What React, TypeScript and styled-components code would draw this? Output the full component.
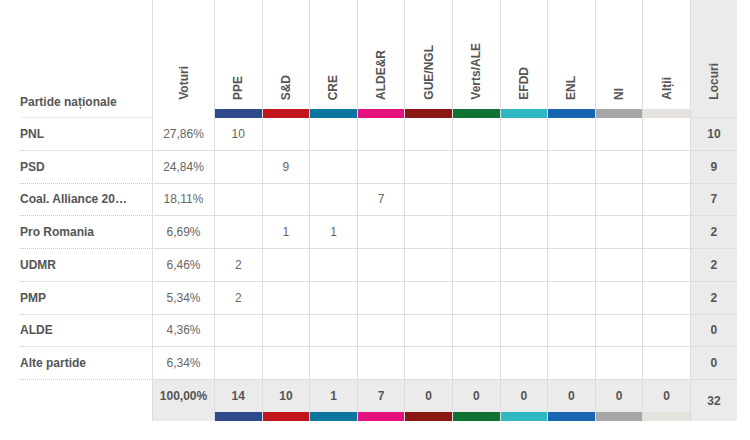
import React from "react";
import styled, { createGlobalStyle } from "styled-components";

const Global = createGlobalStyle`
  html, body { margin: 0; padding: 0; background: #fff; }
  body { font-family: "Liberation Sans", Arial, sans-serif; }
`;

type Party = { key: string; label: string; color: string };

const parties: Party[] = [
  { key: "ppe", label: "PPE", color: "#2c4a8c" },
  { key: "sd", label: "S&D", color: "#c3161c" },
  { key: "cre", label: "CRE", color: "#0a76a0" },
  { key: "alde", label: "ALDE&R", color: "#e5117e" },
  { key: "gue", label: "GUE/NGL", color: "#8a1914" },
  { key: "verts", label: "Verts/ALE", color: "#0e7234" },
  { key: "efdd", label: "EFDD", color: "#2fb8c1" },
  { key: "enl", label: "ENL", color: "#1866b2" },
  { key: "ni", label: "NI", color: "#a6a6a6" },
  { key: "alt", label: "Alții", color: "#e6e3df" },
];

type Row = { name: string; votes: string; seats: Record<string, number>; total: number };

const rows: Row[] = [
  { name: "PNL", votes: "27,86%", seats: { ppe: 10 }, total: 10 },
  { name: "PSD", votes: "24,84%", seats: { sd: 9 }, total: 9 },
  { name: "Coal. Alliance 20…", votes: "18,11%", seats: { alde: 7 }, total: 7 },
  { name: "Pro Romania", votes: "6,69%", seats: { sd: 1, cre: 1 }, total: 2 },
  { name: "UDMR", votes: "6,46%", seats: { ppe: 2 }, total: 2 },
  { name: "PMP", votes: "5,34%", seats: { ppe: 2 }, total: 2 },
  { name: "ALDE", votes: "4,36%", seats: {}, total: 0 },
  { name: "Alte partide", votes: "6,34%", seats: {}, total: 0 },
];

const totals: Record<string, number> = {
  ppe: 14, sd: 10, cre: 1, alde: 7, gue: 0, verts: 0, efdd: 0, enl: 0, ni: 0, alt: 0,
};

const Page = styled.div`
  padding-left: 20px;
`;

const Table = styled.div`
  display: grid;
  grid-template-columns: 132px 62px repeat(10, 47.6px) 47px;
  grid-template-rows: 118px repeat(8, 32.75px) 41px;
  font-size: 12px;
  line-height: 14px;
`;

const NameHead = styled.div`
  display: flex;
  align-items: flex-end;
  padding-bottom: 8px;
  border-bottom: 1px solid #eeeeee;
  font-weight: bold;
  color: #555;
  box-sizing: border-box;
`;

const ColHead = styled.div<{ $grey?: boolean }>`
  display: flex;
  flex-direction: column;
  align-items: center;
  justify-content: flex-end;
  border-left: 1px solid #dddddd;
  background: ${(p) => (p.$grey ? "#ebebeb" : "#fff")};
  border-bottom: ${(p) => (p.$grey ? "1px solid #dddddd" : "none")};
  padding-bottom: ${(p) => (p.$grey ? "17px" : "18px")};
  box-sizing: border-box;
`;

const PartyHead = styled.div`
  display: flex;
  flex-direction: column;
  align-items: center;
  justify-content: flex-end;
  border-left: 1px solid #dddddd;
  box-sizing: border-box;
`;

const VLabel = styled.span`
  writing-mode: vertical-rl;
  transform: rotate(180deg);
  font-weight: bold;
  color: #555;
  white-space: nowrap;
`;

const Bar = styled.div<{ $color: string }>`
  align-self: stretch;
  height: 9px;
  margin-top: 9px;
  background: ${(p) => p.$color};
`;

const FootBar = styled.div<{ $color: string }>`
  align-self: stretch;
  height: 9px;
  background: ${(p) => p.$color};
`;

const NameCell = styled.div`
  display: flex;
  align-items: center;
  border-bottom: 1px dotted #c8c8c8;
  font-weight: bold;
  color: #555;
  white-space: nowrap;
  box-sizing: border-box;
`;

const Cell = styled.div<{ $grey?: boolean; $bold?: boolean }>`
  display: flex;
  align-items: center;
  justify-content: center;
  border-left: 1px solid #dddddd;
  border-bottom: 1px solid #dddddd;
  background: ${(p) => (p.$grey ? "#ebebeb" : "#fff")};
  color: ${(p) => (p.$bold ? "#555" : "#666")};
  font-weight: ${(p) => (p.$bold ? "bold" : "normal")};
  box-sizing: border-box;
`;

const Blank = styled.div``;

const FootCell = styled.div`
  display: flex;
  flex-direction: column;
  align-items: center;
  border-left: 1px solid #dddddd;
  background: #ebebeb;
  color: #555;
  font-weight: bold;
  box-sizing: border-box;
`;

const FootValue = styled.div`
  flex: 1;
  display: flex;
  align-items: center;
  justify-content: center;
`;

export default function App() {
  return (
    <Page>
      <Global />
      <Table>
        <NameHead>Partide naționale</NameHead>
        <ColHead>
          <VLabel>Voturi</VLabel>
        </ColHead>
        {parties.map((p) => (
          <PartyHead key={p.key}>
            <VLabel>{p.label}</VLabel>
            <Bar $color={p.color} />
          </PartyHead>
        ))}
        <ColHead $grey>
          <VLabel>Locuri</VLabel>
        </ColHead>

        {rows.map((r) => (
          <React.Fragment key={r.name}>
            <NameCell>{r.name}</NameCell>
            <Cell>{r.votes}</Cell>
            {parties.map((p) => (
              <Cell key={p.key}>{r.seats[p.key] ?? ""}</Cell>
            ))}
            <Cell $grey $bold>
              {r.total}
            </Cell>
          </React.Fragment>
        ))}

        <Blank />
        <FootCell>
          <FootValue>100,00%</FootValue>
          <FootBar $color="transparent" />
        </FootCell>
        {parties.map((p) => (
          <FootCell key={p.key}>
            <FootValue>{totals[p.key]}</FootValue>
            <FootBar $color={p.color} />
          </FootCell>
        ))}
        <FootCell>
          <FootValue>32</FootValue>
        </FootCell>
      </Table>
    </Page>
  );
}
